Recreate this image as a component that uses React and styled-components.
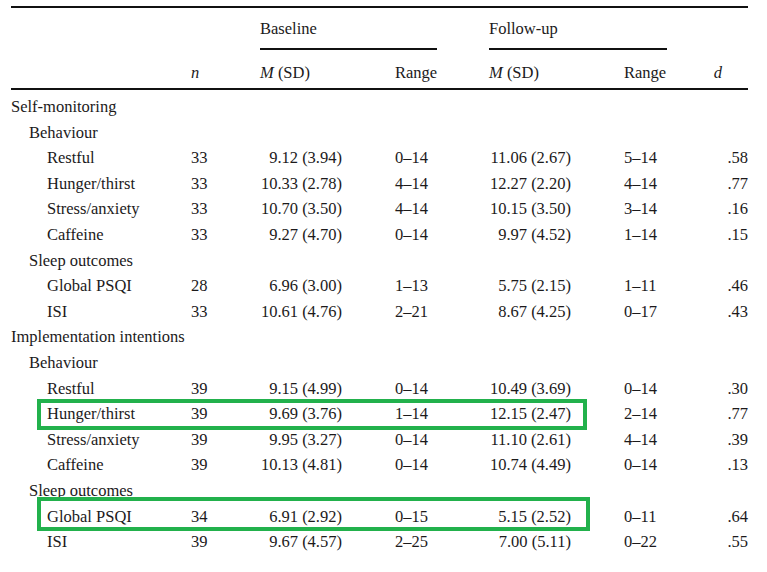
import React from 'react';
import styled, { createGlobalStyle } from 'styled-components';

const GlobalStyle = createGlobalStyle`
  html, body {
    margin: 0;
    padding: 0;
    background: #fff;
  }
  body {
    font-family: "Liberation Serif", "Times New Roman", serif;
    font-size: 16.5px;
    color: #1c1a1b;
  }
`;

const COLS = '180px 64px 87px 95px 134px 96px 81px';

const Page = styled.div`
  padding: 6px 0 0 11px;
  width: 737px;
`;

const Table = styled.div`
  border-top: 2px solid #111;
`;

const Head = styled.div`
  display: grid;
  grid-template-columns: ${COLS};
  border-bottom: 2px solid #111;
`;

const GroupCell = styled.div`
  grid-row: 1;
  grid-column: ${p => p.$col} / span 2;
  margin-left: ${p => p.$indent}px;
  padding: 12px 0 10px;
  line-height: 18px;
  border-bottom: 2px solid #111;
`;

const HeadCell = styled.div`
  grid-row: 2;
  grid-column: ${p => p.$col};
  padding: 14px 0 6px;
  line-height: 18px;
  padding-left: ${p => p.$left || 0}px;
  padding-right: ${p => p.$right || 0}px;
  text-align: ${p => p.$align || 'left'};
`;

const Em = styled.i`
  font-style: italic;
`;

const Body = styled.div`
  padding-top: 4px;
`;

const Row = styled.div`
  position: relative;
  display: grid;
  grid-template-columns: ${COLS};
  line-height: 25.6px;
  white-space: nowrap;
`;

const Label = styled.div`
  padding-left: ${p => p.$level * 18}px;
  grid-column: ${p => (p.$full ? '1 / -1' : 'auto')};
`;

const Cell = styled.div`
  text-align: ${p => p.$align || 'left'};
  padding-left: ${p => p.$left || 0}px;
`;

const Highlight = styled.div`
  position: absolute;
  left: 26px;
  top: ${p => p.$top}px;
  width: ${p => p.$width}px;
  height: ${p => p.$height}px;
  box-sizing: border-box;
  border: 4px solid #22b14c;
  pointer-events: none;
`;

const rows = [
  { label: 'Self-monitoring', level: 0 },
  { label: 'Behaviour', level: 1 },
  { label: 'Restful', level: 2, v: ['33', '9.12 (3.94)', '0–14', '11.06 (2.67)', '5–14', '.58'] },
  { label: 'Hunger/thirst', level: 2, v: ['33', '10.33 (2.78)', '4–14', '12.27 (2.20)', '4–14', '.77'] },
  { label: 'Stress/anxiety', level: 2, v: ['33', '10.70 (3.50)', '4–14', '10.15 (3.50)', '3–14', '.16'] },
  { label: 'Caffeine', level: 2, v: ['33', '9.27 (4.70)', '0–14', '9.97 (4.52)', '1–14', '.15'] },
  { label: 'Sleep outcomes', level: 1 },
  { label: 'Global PSQI', level: 2, v: ['28', '6.96 (3.00)', '1–13', '5.75 (2.15)', '1–11', '.46'] },
  { label: 'ISI', level: 2, v: ['33', '10.61 (4.76)', '2–21', '8.67 (4.25)', '0–17', '.43'] },
  { label: 'Implementation intentions', level: 0 },
  { label: 'Behaviour', level: 1 },
  { label: 'Restful', level: 2, v: ['39', '9.15 (4.99)', '0–14', '10.49 (3.69)', '0–14', '.30'] },
  { label: 'Hunger/thirst', level: 2, v: ['39', '9.69 (3.76)', '1–14', '12.15 (2.47)', '2–14', '.77'], box: { top: -2, width: 550, height: 31 } },
  { label: 'Stress/anxiety', level: 2, v: ['39', '9.95 (3.27)', '0–14', '11.10 (2.61)', '4–14', '.39'] },
  { label: 'Caffeine', level: 2, v: ['39', '10.13 (4.81)', '0–14', '10.74 (4.49)', '0–14', '.13'] },
  { label: 'Sleep outcomes', level: 1 },
  { label: 'Global PSQI', level: 2, v: ['34', '6.91 (2.92)', '0–15', '5.15 (2.52)', '0–11', '.64'], box: { top: -7, width: 553, height: 34 } },
  { label: 'ISI', level: 2, v: ['39', '9.67 (4.57)', '2–25', '7.00 (5.11)', '0–22', '.55'] },
];

function DataRow({ row }) {
  if (!row.v) {
    return (
      <Row>
        <Label $level={row.level} $full>{row.label}</Label>
      </Row>
    );
  }
  const [n, bm, br, fm, fr, d] = row.v;
  return (
    <Row>
      <Label $level={row.level}>{row.label}</Label>
      <Cell>{n}</Cell>
      <Cell $align="right">{bm}</Cell>
      <Cell $left={53}>{br}</Cell>
      <Cell $align="right">{fm}</Cell>
      <Cell $left={53}>{fr}</Cell>
      <Cell $align="right">{d}</Cell>
      {row.box && <Highlight $top={row.box.top} $width={row.box.width} $height={row.box.height} />}
    </Row>
  );
}

export default function App() {
  return (
    <Page>
      <GlobalStyle />
      <Table>
        <Head>
          <GroupCell $col={3} $indent={5}>Baseline</GroupCell>
          <GroupCell $col={5} $indent={52}>Follow-up</GroupCell>
          <HeadCell $col={2}><Em>n</Em></HeadCell>
          <HeadCell $col={3} $left={5}><Em>M</Em> (SD)</HeadCell>
          <HeadCell $col={4} $left={53}>Range</HeadCell>
          <HeadCell $col={5} $left={52}><Em>M</Em> (SD)</HeadCell>
          <HeadCell $col={6} $left={53}>Range</HeadCell>
          <HeadCell $col={7} $align="right" $right={26}><Em>d</Em></HeadCell>
        </Head>
        <Body>
          {rows.map((row, i) => (
            <DataRow key={i} row={row} />
          ))}
        </Body>
      </Table>
    </Page>
  );
}
